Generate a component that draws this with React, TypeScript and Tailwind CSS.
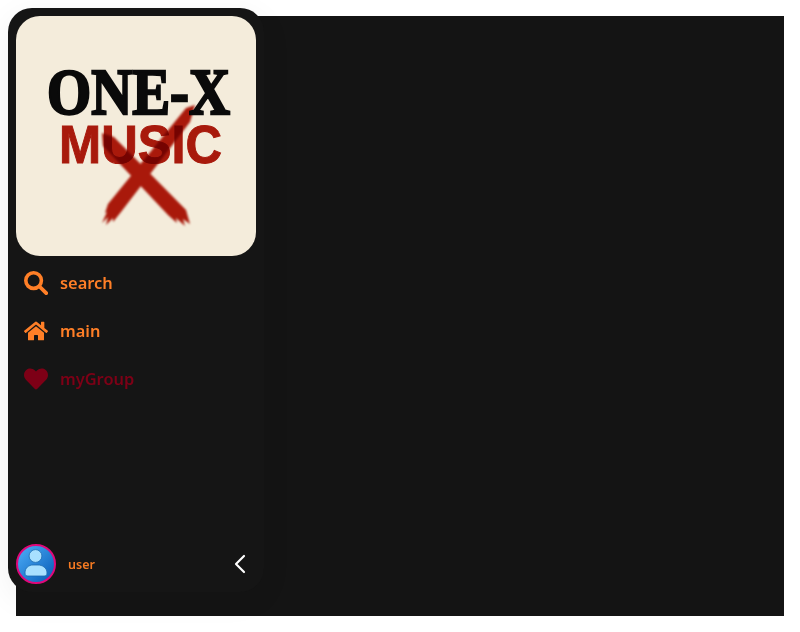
import React from 'react';
import { FaHome, FaHeart } from 'react-icons/fa';
import { ChevronLeft } from 'lucide-react';

function SearchIcon({ className }: { className?: string }) {
  return (
    <svg viewBox="0 0 24 24" fill="none" stroke="currentColor" className={className}>
      <circle cx="9.6" cy="9.6" r="7.8" strokeWidth="3.6" />
      <path d="M15.5 15.5 L22.2 22.2" strokeWidth="3.8" strokeLinecap="round" />
    </svg>
  );
}

const links = [
  { label: 'search', icon: SearchIcon, color: 'text-[#ff7f27]' },
  { label: 'main', icon: FaHome, color: 'text-[#ff7f27]' },
  { label: 'myGroup', icon: FaHeart, color: 'text-[#7d0016]' },
];

function Logo() {
  return (
    <svg viewBox="0 0 240 240" className="block w-full h-full">
      <rect width="240" height="240" fill="#f4ecdb" />
      <g fill="#a9190b" style={{ filter: 'blur(0.9px)' }}>
        <path d="M179 89 L170 92 L92 188 L89 197 L91 196 L86 207 L92 201 L90 209 L97 202 L97 206 L105 196 L174 106 Z" />
        <path d="M86 117 L98 121 L170 194 L174 208 L167 203 L169 210 L160 202 L161 207 L152 199 L87 130 Z" />
      </g>
      <text x="31" y="98" textLength="183" lengthAdjust="spacingAndGlyphs" fontFamily="Liberation Serif" fontWeight="700" fontSize="66" fill="#0a0a0a" stroke="#0a0a0a" strokeWidth="2.4">ONE-X</text>
      <text x="43" y="147" textLength="163" lengthAdjust="spacingAndGlyphs" fontFamily="Liberation Sans" fontWeight="700" fontSize="54" fill="#b01c0e" stroke="#b01c0e" strokeWidth="1" style={{ mixBlendMode: 'multiply' }}>MUSIC</text>
    </svg>
  );
}

function Avatar() {
  return (
    <svg viewBox="0 0 40 40" className="block w-10 h-10">
      <defs>
        <linearGradient id="avatar-bg" x1="0" y1="0" x2="1" y2="1">
          <stop offset="0" stopColor="#4fb0fa" />
          <stop offset="1" stopColor="#0458b4" />
        </linearGradient>
      </defs>
      <circle cx="20" cy="20" r="19" fill="url(#avatar-bg)" stroke="#e0087a" strokeWidth="2" />
      <circle cx="19.5" cy="12" r="6.4" fill="#a8e0ff" stroke="#1c6bb0" strokeWidth="0.8" />
      <path d="M9 29 C9 23.5 13 21 17 21 L22 21 C26 21 31 23.5 31 29 C31 31.5 29.5 32 28 32 L12 32 C10.5 32 9 31.5 9 29 Z" fill="#a8e0ff" stroke="#1c6bb0" strokeWidth="0.8" />
    </svg>
  );
}

export default function App() {
  return (
    <div className="relative h-[632px] w-[800px] bg-white p-4 font-['Noto_Sans',sans-serif] overflow-hidden">
      <div className="h-[600px] w-full bg-[#141414]" />

      <aside className="absolute left-2 top-2 flex h-[584px] w-[256px] flex-col rounded-3xl bg-[#151515] p-2 shadow-[0_8px_32px_rgba(0,0,0,0.06)]">
        <div className="h-60 w-60 shrink-0 overflow-hidden rounded-3xl">
          <Logo />
        </div>

        <nav className="flex flex-col pt-[3px]">
          {links.map(({ label, icon: Icon, color }) => (
            <a key={label} className={`flex h-12 items-center gap-3 px-2 text-[16.4px] font-semibold ${color}`}>
              <span className="flex w-6 justify-center">
                <Icon className="h-6 w-6" />
              </span>
              {label}
            </a>
          ))}
        </nav>

        <div className="mt-auto flex h-10 items-center">
          <Avatar />
          <span className="ml-3 pt-[3px] text-[12.5px] font-semibold text-[#f57a22]">user</span>
          <ChevronLeft className="ml-auto -my-1 h-8 w-8 text-white" strokeWidth={1.6} />
        </div>
      </aside>
    </div>
  );
}
